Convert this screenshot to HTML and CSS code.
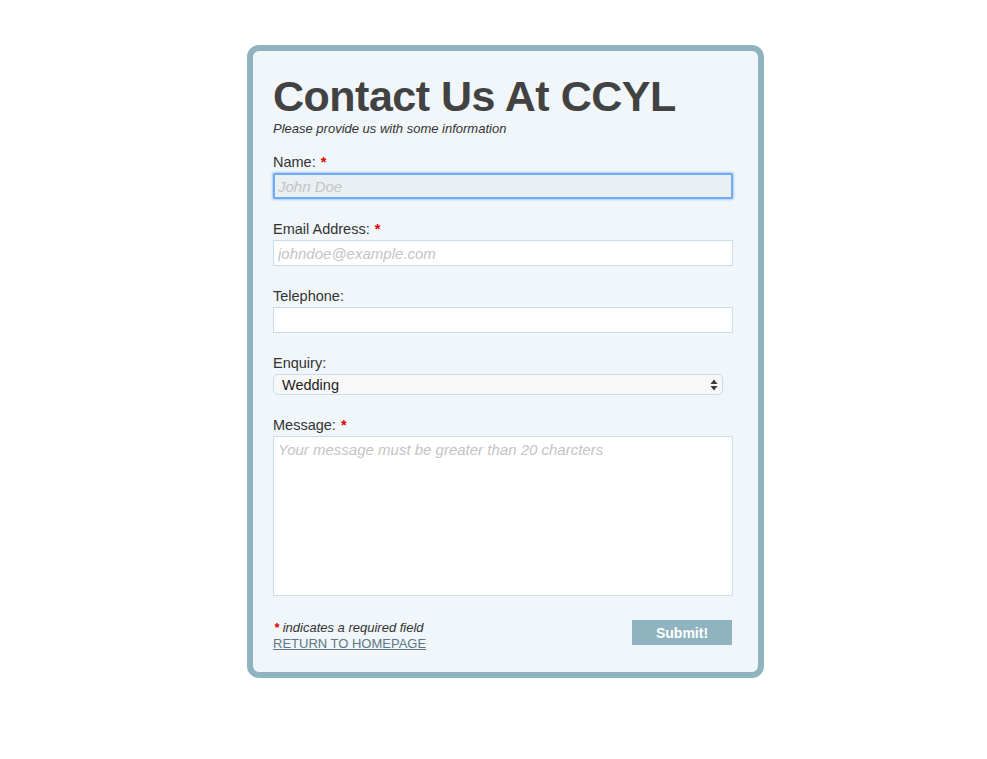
FILE: index.html
```html
<!DOCTYPE html>
<html lang="en">
<head>
<meta charset="utf-8">
<title>Contact Us At CCYL</title>
<link rel="stylesheet" href="styles.css">
</head>
<body>
<main class="card">
  <h1 class="title">Contact Us At CCYL</h1>
  <p class="subtitle">Please provide us with some information</p>
  <form class="form">
    <div class="field">
      <label class="label">Name: <span class="req">*</span></label>
      <input class="input input-focus" type="text" placeholder="John Doe">
    </div>
    <div class="field">
      <label class="label">Email Address: <span class="req">*</span></label>
      <input class="input" type="text" placeholder="johndoe@example.com">
    </div>
    <div class="field">
      <label class="label">Telephone:</label>
      <input class="input" type="text">
    </div>
    <div class="field">
      <label class="label">Enquiry:</label>
      <div class="select">
        <span class="select-value">Wedding</span>
        <svg class="select-arrows" width="8" height="12" viewBox="0 0 8 12"><path d="M4 0.5 L7.5 5 L0.5 5 Z M0.5 7 L7.5 7 L4 11.5 Z" fill="#3a3a3a"/></svg>
      </div>
    </div>
    <div class="field">
      <label class="label">Message: <span class="req">*</span></label>
      <textarea class="textarea" placeholder="Your message must be greater than 20 charcters"></textarea>
    </div>
    <div class="footer">
      <div class="footer-text">
        <p class="note"><span class="req">*</span> indicates a required field</p>
        <a class="home-link" href="#">RETURN TO HOMEPAGE</a>
      </div>
      <button class="submit" type="button">Submit!</button>
    </div>
  </form>
</main>
</body>
</html>
```
FILE: styles.css
```css
html, body {
  margin: 0;
  padding: 0;
  background: #ffffff;
}
body {
  font-family: "Liberation Sans", Arial, Helvetica, sans-serif;
  color: #333333;
  padding-top: 45px;
}
.card {
  box-sizing: border-box;
  width: 517px;
  margin: 0 0 0 247px;
  border: 6px solid #8fb4c0;
  border-radius: 12px;
  background: #f0f6f9;
  padding: 22px 25px 20px 20px;
}
.title {
  margin: 0;
  font-size: 43px;
  line-height: 46px;
  font-weight: bold;
  color: #424242;
  letter-spacing: -0.5px;
}
.subtitle {
  margin: 2px 0 0 0;
  font-size: 13px;
  line-height: 16px;
  font-style: italic;
  color: #333;
}
.form {
  margin-top: 15px;
  display: flex;
  flex-direction: column;
}
.field {
  display: flex;
  flex-direction: column;
  margin-bottom: 20px;
}
.label {
  font-size: 14.5px;
  line-height: 17px;
  padding-top: 2px;
  margin-bottom: 2px;
  color: #333;
}
.req {
  color: #e00000;
  font-weight: bold;
  margin-left: 1px;
}
.input {
  box-sizing: border-box;
  width: 460px;
  height: 26px;
  margin: 0;
  border: 1px solid #c9dfe8;
  background: #ffffff;
  padding: 0 4px;
  font-family: "Liberation Sans", Arial, sans-serif;
  font-size: 15px;
  outline: none;
}
.input::placeholder, .textarea::placeholder {
  color: #c4c4c4;
  font-style: italic;
}
.input-focus {
  background: #e8f0f3;
  border: 2px solid #72abef;
  border-radius: 2px;
  box-shadow: 0 0 2px 1px #a9cdf7;
  padding: 0 3px;
}
.select {
  box-sizing: border-box;
  width: 450px;
  height: 21px;
  border: 1px solid #c9dfe8;
  border-radius: 5px;
  background: #f8f8f8;
  display: flex;
  align-items: center;
  justify-content: space-between;
  padding: 0 4px 0 8px;
}
.select-value {
  font-size: 14.5px;
  color: #222;
}
.select-arrows {
  display: block;
}
.textarea {
  box-sizing: border-box;
  width: 460px;
  height: 160px;
  margin: 0;
  border: 1px solid #c9dfe8;
  background: #fff;
  padding: 4px 4px;
  font-family: "Liberation Sans", Arial, sans-serif;
  font-size: 15px;
  resize: none;
  outline: none;
}
.footer {
  display: flex;
  justify-content: space-between;
  align-items: flex-start;
  width: 459px;
  margin-top: 4px;
}
.note {
  margin: 0;
  font-size: 13px;
  line-height: 16px;
  font-style: italic;
  color: #333;
}
.home-link {
  display: block;
  font-size: 13px;
  line-height: 16px;
  color: #5f7785;
  text-decoration: underline;
}
.submit {
  width: 100px;
  height: 25px;
  margin-top: 0;
  border: none;
  background: #8fb4c0;
  color: #ffffff;
  font-family: "Liberation Sans", Arial, sans-serif;
  font-size: 14px;
  font-weight: bold;
  padding: 0;
  cursor: pointer;
}
```
